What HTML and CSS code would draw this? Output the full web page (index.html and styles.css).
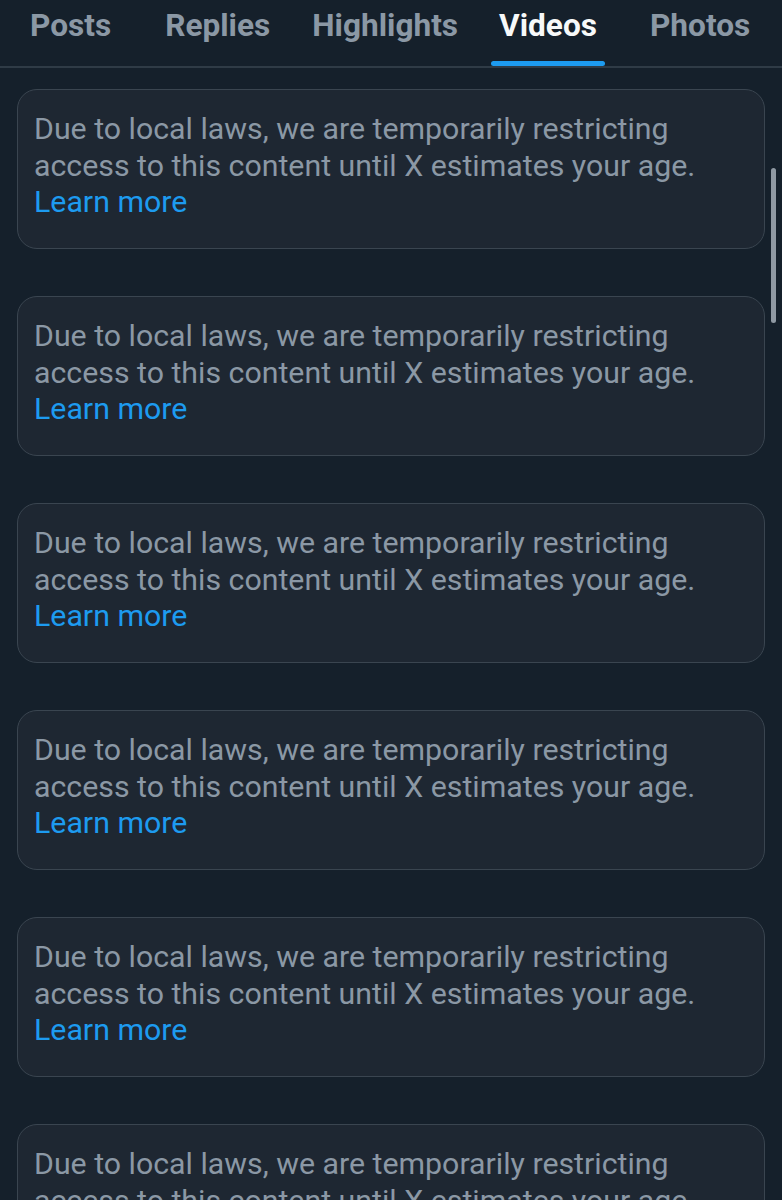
FILE: index.html
```html
<!DOCTYPE html>
<html>
<head>
<meta charset="utf-8">
<link rel="stylesheet" href="styles.css">
</head>
<body>
<div class="page">
  <nav class="tabs">
    <span class="tab tab-posts">Posts</span>
    <span class="tab tab-replies">Replies</span>
    <span class="tab tab-highlights">Highlights</span>
    <span class="tab tab-videos active">Videos</span>
    <span class="tab tab-photos">Photos</span>
  </nav>
  <main class="list">
    <div class="card"><p>Due to local laws, we are temporarily restricting access to this content until X estimates your age.</p><a class="link">Learn more</a></div>
    <div class="card"><p>Due to local laws, we are temporarily restricting access to this content until X estimates your age.</p><a class="link">Learn more</a></div>
    <div class="card"><p>Due to local laws, we are temporarily restricting access to this content until X estimates your age.</p><a class="link">Learn more</a></div>
    <div class="card"><p>Due to local laws, we are temporarily restricting access to this content until X estimates your age.</p><a class="link">Learn more</a></div>
    <div class="card"><p>Due to local laws, we are temporarily restricting access to this content until X estimates your age.</p><a class="link">Learn more</a></div>
    <div class="card"><p>Due to local laws, we are temporarily restricting access to this content until X estimates your age.</p><a class="link">Learn more</a></div>
  </main>
  <div class="scrollbar"></div>
</div>
</body>
</html>
```
FILE: styles.css
```css
* { box-sizing: border-box; }
html, body {
  margin: 0;
  padding: 0;
  background: #15202b;
  height: 1200px;
  overflow: hidden;
}
.page {
  position: relative;
  width: 782px;
  font-family: Roboto, "Liberation Sans", sans-serif;
}
.tabs {
  display: flex;
  align-items: flex-start;
  height: 68px;
  border-bottom: 2px solid #2f3b46;
  padding-left: 30px;
}
.tab {
  position: relative;
  font-weight: 700;
  font-size: 31.6px;
  line-height: 52px;
  color: #8b98a5;
  white-space: nowrap;
}
.tab-posts { margin-right: 54px; }
.tab-replies { margin-right: 42px; }
.tab-highlights { margin-right: 41px; }
.tab-videos { margin-right: 53px; }
.tab.active { color: #f7f9f9; }
.tab.active::after {
  content: "";
  position: absolute;
  left: -8px;
  right: -8px;
  top: 61px;
  height: 5px;
  border-radius: 3px;
  background: #1d9bf0;
}
.list {
  display: flex;
  flex-direction: column;
  gap: 47px;
  padding: 21px 17px 0 17px;
}
.card {
  flex: none;
  height: 160px;
  background: #1e2732;
  border: 1px solid #3a4550;
  border-radius: 20px;
  padding: 21px 30px 0 16px;
  font-size: 30.3px;
  line-height: 36.5px;
}
.card p {
  margin: 0;
  color: #8b98a5;
}
.link {
  display: block;
  color: #1d9bf0;
  text-decoration: none;
}
.scrollbar {
  position: absolute;
  left: 771px;
  top: 168px;
  width: 5px;
  height: 155px;
  border-radius: 3px;
  background: #8f99a3;
}
```
